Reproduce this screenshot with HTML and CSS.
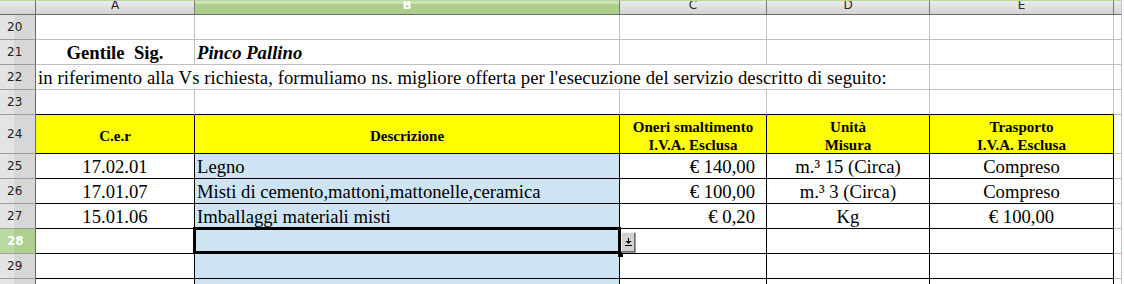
FILE: index.html
```html
<!DOCTYPE html>
<html lang="it">
<head>
  <meta charset="UTF-8">
  <title>Offerta</title>
  <link rel="stylesheet" href="styles.css">
</head>
<body>

  <div class="sheet">
    <!-- Column headers -->
    <div class="row colhead">
      <div class="ch corner"></div>
      <div class="ch">A</div>
      <div class="ch chsel">B</div>
      <div class="ch">C</div>
      <div class="ch">D</div>
      <div class="ch">E</div>
      <div class="ch edge"></div>
    </div>

    <div class="row">
      <div class="rh">20</div>
      <div class="cell"></div>
      <div class="cell"></div>
      <div class="cell"></div>
      <div class="cell"></div>
      <div class="cell"></div>
      <div class="cell edge"></div>
    </div>

    <div class="row">
      <div class="rh">21</div>
      <div class="cell c b">Gentile&nbsp; Sig.</div>
      <div class="cell b i">Pinco Pallino</div>
      <div class="cell"></div>
      <div class="cell"></div>
      <div class="cell"></div>
      <div class="cell edge"></div>
    </div>

    <div class="row">
      <div class="rh">22</div>
      <div class="cell span4">in riferimento alla Vs richiesta, formuliamo ns. migliore offerta per l'esecuzione del servizio descritto di seguito:</div>
      <div class="cell"></div>
      <div class="cell edge"></div>
    </div>

    <div class="row">
      <div class="rh">23</div>
      <div class="cell under"></div>
      <div class="cell under"></div>
      <div class="cell under"></div>
      <div class="cell under"></div>
      <div class="cell under"></div>
      <div class="cell edge"></div>
    </div>

    <!-- Table header -->
    <div class="row tall">
      <div class="rh">24</div>
      <div class="cell t yel hcell">C.e.r</div>
      <div class="cell t yel hcell">Descrizione</div>
      <div class="cell t yel hcell"><span>Oneri smaltimento</span><span>I.V.A. Esclusa</span></div>
      <div class="cell t yel hcell"><span>Unità</span><span>Misura</span></div>
      <div class="cell t yel hcell"><span>Trasporto</span><span>I.V.A. Esclusa</span></div>
      <div class="cell edge"></div>
    </div>

    <div class="row">
      <div class="rh">25</div>
      <div class="cell t c">17.02.01</div>
      <div class="cell t blue">Legno</div>
      <div class="cell t r">€ 140,00</div>
      <div class="cell t c">m.³ 15 (Circa)</div>
      <div class="cell t c">Compreso</div>
      <div class="cell edge"></div>
    </div>

    <div class="row">
      <div class="rh">26</div>
      <div class="cell t c">17.01.07</div>
      <div class="cell t blue">Misti di cemento,mattoni,mattonelle,ceramica</div>
      <div class="cell t r">€ 100,00</div>
      <div class="cell t c">m.³ 3 (Circa)</div>
      <div class="cell t c">Compreso</div>
      <div class="cell edge"></div>
    </div>

    <div class="row">
      <div class="rh">27</div>
      <div class="cell t c">15.01.06</div>
      <div class="cell t blue">Imballaggi materiali misti</div>
      <div class="cell t r">€ 0,20</div>
      <div class="cell t c">Kg</div>
      <div class="cell t c">€ 100,00</div>
      <div class="cell edge"></div>
    </div>

    <div class="row">
      <div class="rh rhsel">28</div>
      <div class="cell t"></div>
      <div class="cell t blue active">
        <span class="drop">
          <svg width="9" height="10" viewBox="0 0 9 10">
            <rect x="4" y="1" width="1" height="3" fill="#000"/>
            <path d="M1.5 4 H7.5 L4.5 7 Z" fill="#000"/>
            <rect x="1" y="8" width="7" height="1" fill="#000"/>
          </svg>
        </span>
      </div>
      <div class="cell t"></div>
      <div class="cell t"></div>
      <div class="cell t"></div>
      <div class="cell edge"></div>
    </div>

    <div class="row">
      <div class="rh">29</div>
      <div class="cell t"></div>
      <div class="cell t blue"></div>
      <div class="cell t"></div>
      <div class="cell t"></div>
      <div class="cell t"></div>
      <div class="cell"></div>
    </div>

    <div class="row">
      <div class="rh">30</div>
      <div class="cell t"></div>
      <div class="cell t blue"></div>
      <div class="cell t"></div>
      <div class="cell t"></div>
      <div class="cell t"></div>
      <div class="cell"></div>
    </div>
  </div>

</body>
</html>
```

FILE: styles.css
```css
body {
  margin: 0;
  overflow: hidden;
  background-color: #fff;
  font-family: "Liberation Serif", "Times New Roman", serif;
  color: #000;
}
.sheet {
  width: 1124px;
}
.row {
  display: grid;
  grid-template-columns: 36px 159px 425px 147px 163px 184px 8px;
  height: 25px;
}
.row.colhead {
  height: 15px;
}
.row.tall {
  height: 39px;
}

/* Column headers */
.ch {
  box-sizing: border-box;
  display: flex;
  justify-content: center;
  align-items: flex-start;
  overflow: hidden;
  border-top: 1px solid #b9d79f;
  border-right: 1px solid #7a7a7a;
  border-bottom: 1px solid #6c6c6c;
  background: linear-gradient(#ebebeb, #d3d3d3);
  font-family: "DejaVu Sans", sans-serif;
  font-size: 12px;
  line-height: 9px;
  color: #2a2a2a;
}
.ch.corner {
  border-right-color: #6c6c6c;
}
.ch.chsel {
  background: linear-gradient(#cbe2b6 0, #cbe2b6 3px, #adcd8a 3px);
  color: #fff;
  font-weight: bold;
}
.ch.edge {
  border-right: 1px solid #b5d49b;
}

/* Row headers */
.rh {
  box-sizing: border-box;
  display: flex;
  align-items: center;
  padding-left: 7px;
  overflow: hidden;
  border-right: 1px solid #6c6c6c;
  border-bottom: 1px solid #9d9d9d;
  background: linear-gradient(to right, #e4e4e4 0, #e4e4e4 14px, #d7d7d7 14px);
  font-family: "DejaVu Sans", sans-serif;
  font-size: 12px;
  color: #222;
}
.rh.rhsel {
  background: linear-gradient(to right, #bcd8a2 0, #bcd8a2 14px, #afcf8e 14px);
  color: #fff;
  font-weight: bold;
}

/* Cells */
.cell {
  box-sizing: border-box;
  display: flex;
  align-items: flex-end;
  padding: 0 2px;
  overflow: hidden;
  white-space: nowrap;
  border-right: 1px solid #c0c0c0;
  border-bottom: 1px solid #c0c0c0;
  font-size: 18.67px;
  line-height: 22px;
}
.cell.edge {
  border-right: 1px solid #b5d49b;
}
.span4 {
  grid-column: span 4;
  letter-spacing: 0.08px;
}
.c {
  justify-content: center;
}
.r {
  justify-content: flex-end;
  padding-right: 11px;
}
.b {
  font-weight: bold;
}
.i {
  font-style: italic;
}
.under {
  border-bottom-color: #000;
}
.t {
  border-right-color: #000;
  border-bottom-color: #000;
}
.yel {
  background-color: #ffff00;
}
.blue {
  background-color: #cfe4f2;
}
.hcell {
  flex-direction: column;
  justify-content: center;
  align-items: center;
  padding-top: 3px;
  font-size: 15px;
  font-weight: bold;
  line-height: 18px;
}

/* Active cell cursor */
.active {
  position: relative;
  overflow: visible;
}
.active::after {
  content: "";
  position: absolute;
  top: -2px;
  left: -2px;
  right: -2px;
  bottom: -1px;
  border: 3px solid #000;
  z-index: 2;
}
.active::before {
  content: "";
  position: absolute;
  right: -4px;
  bottom: -4px;
  width: 5px;
  height: 5px;
  background-color: #000;
  z-index: 3;
}
.drop {
  position: absolute;
  left: calc(100% + 2px);
  top: 3px;
  width: 14px;
  height: 20px;
  box-sizing: border-box;
  display: flex;
  align-items: center;
  justify-content: center;
  background-color: #d2d2d2;
  border: 1px solid;
  border-color: #f2f2f2 #6e6e6e #6e6e6e #f2f2f2;
  box-shadow: 1px 1px 0 #9a9a9a;
  z-index: 3;
}
```
